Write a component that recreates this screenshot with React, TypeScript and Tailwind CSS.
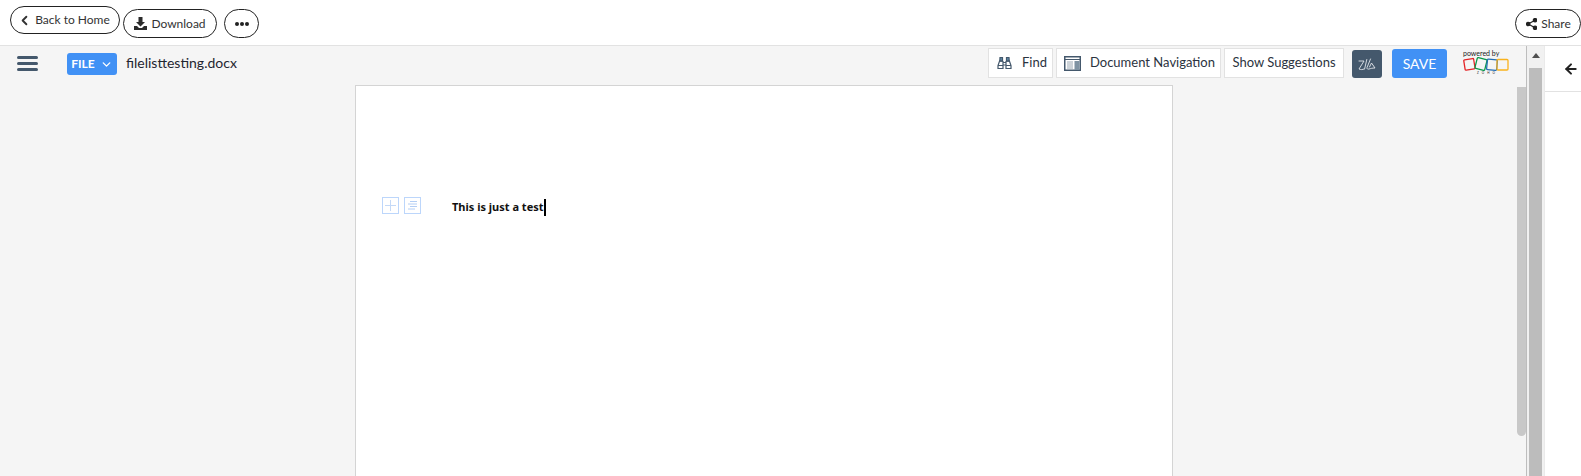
import React from 'react';
import { ChevronDown, ChevronLeft, ArrowLeft } from 'lucide-react';

const lato = "font-['Lato','Open_Sans',sans-serif]";

const Binoculars = () => (
  <svg width="15" height="14" viewBox="0 0 15 14" fill="none" stroke="#44586c" strokeWidth="1.2">
    <path d="M3 1.5h2.5v3.5H2.8z M9.5 1.5H12l.2 3.5H9.5z" fill="#5d8aa8" />
    <path d="M2.6 5 1 9.5v3h5V5.5z M12.4 5 14 9.5v3H9V5.5z M6 6.5h3 M6 9h3" />
    <path d="M1 9.5h5 M9 9.5h5" />
  </svg>
);

const NavIcon = () => (
  <svg width="17" height="15" viewBox="0 0 17 15" fill="none">
    <rect x="0.75" y="0.75" width="15.5" height="13.5" stroke="#44586c" strokeWidth="1.5" fill="#fff" />
    <path d="M1 3.5h15" stroke="#44586c" />
    <rect x="10.5" y="5" width="5" height="9" fill="#7f93a3" />
    <path d="M3 6h6M3 8h6M3 10h6M3 12h6" stroke="#9aa7b2" />
  </svg>
);

const ZiaIcon = () => (
  <svg width="18" height="13" viewBox="0 0 18 13" fill="none" stroke="#e4e8ec" strokeWidth="0.9" strokeLinecap="round" strokeLinejoin="round">
    <path d="M1 3h5L1 11c1.800.8 3.500.8 5 0" />
    <path d="M8.800 1.500 6.600 11" />
    <path d="M12.500 1 9 9.500c-.5 1.500 1 1.800 2 1.500 2-.5 3-1 6-1L13.500 5l-2 4" />
  </svg>
);

const ZohoLogo = () => (
  <svg width="46" height="15" viewBox="0 0 46 15" fill="none" strokeWidth="1.3">
    <rect x="1.500" y="2" width="10" height="10.500" rx="1" stroke="#e42527" transform="rotate(-9 7 8)" />
    <rect x="13" y="1.500" width="10" height="11" rx="1" stroke="#089949" transform="rotate(14 18 7)" />
    <rect x="24" y="2.500" width="10" height="10.500" rx="1" stroke="#226db4" transform="rotate(6 29 8)" />
    <rect x="34" y="2.500" width="11" height="10.500" rx="1" stroke="#f9b21d" />
  </svg>
);

const PillButton = ({ className, children }: { className: string; children: React.ReactNode }) => (
  <button className={`flex items-center justify-center rounded-full border border-[#222] bg-white text-[12px] text-[#333] ${className}`}>
    {children}
  </button>
);

const ToolButton = ({ className, children }: { className: string; children: React.ReactNode }) => (
  <button className={`flex h-[30px] items-center whitespace-nowrap border border-[#e2e2e2] bg-white text-[13px] text-[#2b3340] ${className}`}>
    {children}
  </button>
);

export default function App() {
  return (
    <div className={`flex h-[476px] w-[1581px] flex-col overflow-hidden bg-white ${lato}`}>
      {/* Top bar */}
      <div className="flex h-[46px] shrink-0 items-start border-b border-[#e2e2e2] bg-white pl-[10px]">
        <PillButton className="mt-[6px] h-[28px] w-[110px] gap-[3px]">
          <ChevronLeft size={15} strokeWidth={3} className="-ml-[3px]" />
          Back to Home
        </PillButton>
        <PillButton className="ml-[3px] mt-[9px] h-[29px] w-[94px] gap-[4px]">
          <svg width="13" height="13" viewBox="0 0 13 13" fill="#2b2b2b">
            <path d="M4.500 0h4v5H11L6.500 9.500 2 5h2.500z" />
            <path d="M0 9h3l2 2h3l2-2h3v4H0z" />
          </svg>
          Download
        </PillButton>
        <PillButton className="ml-[7px] mt-[9px] h-[29px] w-[35px] gap-[1px]">
          <span className="h-[4px] w-[4px] rounded-full bg-[#222]" />
          <span className="h-[4px] w-[4px] rounded-full bg-[#222]" />
          <span className="h-[4px] w-[4px] rounded-full bg-[#222]" />
        </PillButton>
        <PillButton className="ml-auto mt-[9px] h-[29px] w-[66px] gap-[4px] pl-[1px]">
          <svg width="11" height="12" viewBox="0 0 11 12" fill="#222" stroke="#222" strokeWidth="1.200">
            <circle cx="2.200" cy="6" r="1.700" />
            <circle cx="9" cy="2.200" r="1.700" />
            <circle cx="9" cy="9.800" r="1.700" />
            <path d="M9 2.200 2.200 6 9 9.800" fill="none" />
          </svg>
          Share
        </PillButton>
      </div>

      <div className="flex min-h-0 flex-1">
        {/* Editor column */}
        <div className="flex w-[1527px] shrink-0 flex-col border-r border-[#bdbdbd] bg-[#f5f5f5]">
          <div className="flex h-[39px] shrink-0 items-start">
            <div className="ml-[17px] mt-[10px] flex h-[15px] w-[21px] flex-col justify-between">
              <span className="h-[3px] rounded-sm bg-[#44586c]" />
              <span className="h-[3px] rounded-sm bg-[#44586c]" />
              <span className="h-[3px] rounded-sm bg-[#44586c]" />
            </div>
            <button className="ml-[29px] mt-[7px] flex h-[22px] w-[50px] items-center justify-center gap-[5px] rounded-[3px] bg-[#4191f5] text-[12px] font-bold text-white">
              FILE
              <ChevronDown size={13} strokeWidth={2.500} />
            </button>
            <span className="ml-[9px] mt-[6px] w-[110px] whitespace-nowrap text-[14px] leading-[22px] text-[#1f2530]">filelisttesting.docx</span>
            <ToolButton className="ml-[752px] mt-[2px] w-[65px] gap-[10px] pl-[8px]">
              <Binoculars />
              Find
            </ToolButton>
            <ToolButton className="ml-[3px] mt-[2px] w-[165px] gap-[9px] pl-[7px]">
              <NavIcon />
              Document Navigation
            </ToolButton>
            <ToolButton className="ml-[3px] mt-[2px] w-[120px] justify-center">Show Suggestions</ToolButton>
            <div className="ml-[8px] mt-[4px] flex h-[28px] w-[30px] items-center justify-center rounded-[3px] bg-[#44586c]">
              <ZiaIcon />
            </div>
            <button className="ml-[10px] mt-[3px] h-[29px] w-[55px] rounded-[3px] bg-[#4191f5] text-[14px] text-white">SAVE</button>
            <div className="ml-[16px] mt-[3px] flex w-[46px] flex-col items-start">
              <span className="text-[7px] leading-[8px] text-[#222]">powered by</span>
              <ZohoLogo />
              <span className="ml-[14px] text-[3px] leading-[3px] tracking-[3px] text-[#222]">ZOHO</span>
            </div>
          </div>

          {/* Document area */}
          <div className="flex min-h-0 flex-1">
            <div className="ml-[355px] flex w-[818px] shrink-0 items-start border-x border-t border-[#d4d4d4] bg-white pl-[26px] pt-[111px]">
              <div className="flex h-[17px] w-[17px] items-center justify-center border border-[#bcd6fb]">
                <svg width="11" height="11" viewBox="0 0 11 11" stroke="#c4d9f7">
                  <path d="M5.500 0v11M0 5.500h11" />
                </svg>
              </div>
              <div className="ml-[5px] flex h-[17px] w-[17px] items-center justify-center border border-[#bcd6fb]">
                <svg width="11" height="11" viewBox="0 0 11 11" stroke="#b3cef5">
                  <path d="M3 1.500h7M1 4h9M3 6.500h7M1 9h7" />
                </svg>
              </div>
              <div className="ml-[31px] mt-[2px] flex h-[17px] items-center font-['Noto_Sans','Open_Sans',sans-serif] text-[11px] font-bold text-[#111]">
                This is just a test
                <span className="h-[17px] w-[2px] bg-black" />
              </div>
            </div>
            <div className="ml-[344px] mt-[2px] h-[349px] w-[9px] rounded-b-[5px] bg-[#c8c8c8]" />
          </div>
        </div>

        {/* Outer scrollbar */}
        <div className="flex w-[17px] shrink-0 flex-col items-center bg-[#f1f1f1]">
          <svg width="8" height="5" viewBox="0 0 8 5" className="mt-[7px]" fill="#505050">
            <path d="M4 0l4 5H0z" />
          </svg>
          <div className="mt-[10px] w-[13px] flex-1 bg-[#bcbcbc]" />
        </div>

        {/* Right panel */}
        <div className="flex min-w-0 flex-1 flex-col border-l border-[#eaeaea] bg-white">
          <div className="flex h-[46px] items-center justify-center border-b border-[#e2e2e2] pl-[15px]">
            <ArrowLeft size={16} strokeWidth={3} className="text-[#222]" />
          </div>
        </div>
      </div>
    </div>
  );
}
